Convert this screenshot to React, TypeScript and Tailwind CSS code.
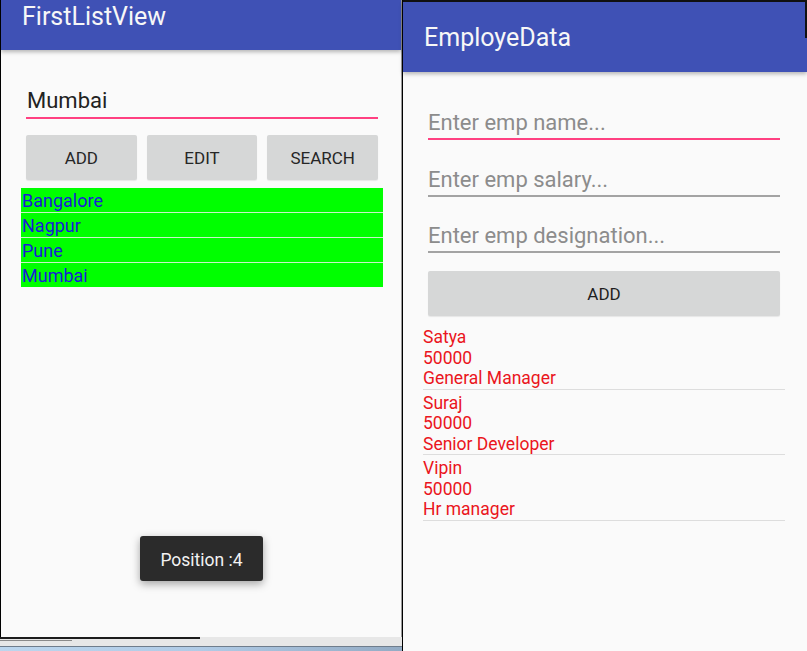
import React from "react";

const cities = ["Bangalore", "Nagpur", "Pune", "Mumbai"];
const employees = [
  { name: "Satya", salary: "50000", role: "General Manager" },
  { name: "Suraj", salary: "50000", role: "Senior Developer" },
  { name: "Vipin", salary: "50000", role: "Hr manager" },
];

export default function App() {
  return (
    <div className="flex h-[651px] w-[807px] overflow-hidden bg-[#fafafa] font-['Roboto','Noto_Sans',sans-serif]">
      {/* Left screen */}
      <div className="flex w-[402px] shrink-0 flex-col">
        <div className="relative h-[637px] border-l border-r border-l-black border-r-[#9a9a9a] bg-[#fafafa]">
          <header className="relative z-10 h-[50px] bg-[#3f51b5] pl-[21px] pt-[2px] shadow-[0_2px_4px_rgba(0,0,0,0.28)]">
            <h1 className="text-[25px] leading-[30px] text-[#f7f7f7]">FirstListView</h1>
          </header>

          <div className="ml-[25px] mr-[23px] mt-[38px] border-b-2 border-[#ff4081] pb-[3px] pl-px text-[22px] leading-[26px] text-[#222222]">
            Mumbai
          </div>

          <div className="ml-[25px] mr-[23px] mt-[16px] grid grid-cols-3 gap-[10px]">
            {["ADD", "EDIT", "SEARCH"].map((b) => (
              <div
                key={b}
                className="flex h-[45px] items-center justify-center rounded-[2px] bg-[#d6d7d7] pt-[3px] text-[17px] text-[#262626] shadow-[0_1px_1px_rgba(0,0,0,0.08)]"
              >
                {b}
              </div>
            ))}
          </div>

          <div className="ml-[20px] mr-[18px] mt-[8px] flex flex-col gap-px bg-[#c8f2c8]">
            {cities.map((c) => (
              <div key={c} className="h-[24px] bg-[#00ff00] pl-px pt-[2px] text-[18px] leading-[22px] text-[#1a1ad8]">
                {c}
              </div>
            ))}
          </div>

          <div className="absolute left-[139px] top-[536px] flex h-[45px] w-[123px] items-center justify-center rounded-[3px] bg-[#2b2b2b] pt-[3px] text-[17.5px] text-[#f2f2f2] shadow-[0_3px_8px_rgba(0,0,0,0.35)]">
            Position :4
          </div>
        </div>

        {/* bottom desktop strip */}
        <div className="flex h-[14px] flex-col bg-[#e7e7e7]">
          <div className="h-[2px] w-[200px] bg-[#1c1c1c]" />
          <div className="mt-[1px] h-[1px] w-[72px] bg-[#8a8a8a]" />
          <div className="flex-1" />
          <div className="h-px bg-[#6f7d8c]" />
          <div className="h-[4px] bg-gradient-to-r from-[#bcd6ee] via-[#b0cbe6] to-[#93abc4]" />
        </div>
      </div>

      {/* Right screen */}
      <div className="relative flex flex-1 flex-col border-l border-black bg-[#fafafa]">
        <div className="h-[2px] bg-[#111111]" />
        <header className="relative z-10 h-[70px] bg-[#3f51b5] pl-[21px] pt-[21px] shadow-[0_2px_4px_rgba(0,0,0,0.28)]">
          <h1 className="text-[25px] leading-[30px] text-[#f7f7f7]">EmployeData</h1>
        </header>
        <div className="absolute right-0 top-0 z-20 h-[38px] w-[2px] bg-[#111111]" />

        <div className="ml-[25px] mr-[27px] mt-[37px] border-b-2 border-[#ff4081] pb-[2px] pt-px text-[22px] leading-[26px] text-[#8c8c8c]">
          Enter emp name...
        </div>
        <div className="ml-[25px] mr-[27px] mt-[26px] border-b-2 border-[#a3a3a3] pb-[2px] pt-px text-[22px] leading-[26px] text-[#8c8c8c]">
          Enter emp salary...
        </div>
        <div className="ml-[25px] mr-[27px] mt-[25px] border-b-2 border-[#a3a3a3] pb-[2px] pt-px text-[22px] leading-[26px] text-[#8c8c8c]">
          Enter emp designation...
        </div>

        <div className="ml-[25px] mr-[27px] mt-[18px] flex h-[45px] items-center justify-center rounded-[2px] bg-[#d6d7d7] pt-[2px] text-[17px] text-[#1f1f1f] shadow-[0_1px_1px_rgba(0,0,0,0.08)]">
          ADD
        </div>

        <div className="ml-[20px] mr-[22px] mt-[8px] flex flex-col">
          {employees.map((e) => (
            <div key={e.name} className="border-b border-[#dddddd] pt-[3px] text-[17.5px] leading-[20.5px] text-[#ea1520]">
              <div>{e.name}</div>
              <div>{e.salary}</div>
              <div>{e.role}</div>
            </div>
          ))}
        </div>
      </div>
    </div>
  );
}
